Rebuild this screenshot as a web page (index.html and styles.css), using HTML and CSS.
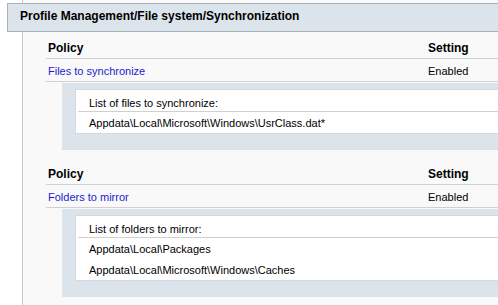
FILE: index.html
```html
<!DOCTYPE html>
<html lang="en">
<head>
    <meta charset="UTF-8">
    <title>Profile Management - Synchronization</title>
    <link rel="stylesheet" href="styles.css">
</head>
<body>
    <div class="report">
        <div class="category">Profile Management/File system/Synchronization</div>

        <div class="policy-block first">
            <div class="policy-row head">
                <span class="name">Policy</span>
                <span class="setting">Setting</span>
            </div>
            <div class="policy-row">
                <span class="name link">Files to synchronize</span>
                <span class="setting">Enabled</span>
            </div>
            <div class="details">
                <div class="list">
                    <div class="list-title">List of files to synchronize:</div>
                    <div class="list-item">Appdata\Local\Microsoft\Windows\UsrClass.dat*</div>
                </div>
            </div>
        </div>

        <div class="policy-block">
            <div class="policy-row head">
                <span class="name">Policy</span>
                <span class="setting">Setting</span>
            </div>
            <div class="policy-row">
                <span class="name link">Folders to mirror</span>
                <span class="setting">Enabled</span>
            </div>
            <div class="details">
                <div class="list">
                    <div class="list-title">List of folders to mirror:</div>
                    <div class="list-item">Appdata\Local\Packages</div>
                    <div class="list-item">Appdata\Local\Microsoft\Windows\Caches</div>
                </div>
            </div>
        </div>
    </div>
</body>
</html>
```

FILE: styles.css
```css
html, body {
    margin: 0;
    padding: 0;
    height: 100%;
    background-color: #ffffff;
    overflow: hidden;
}
body {
    font-family: 'Liberation Sans', Arial, sans-serif;
    font-size: 11px;
    color: #000000;
}
.report {
    margin-left: 22px;
    padding-top: 3px;
    min-height: 100%;
    box-sizing: border-box;
    border-left: 1px solid #c9c9c9;
    background-color: #f9f9f9;
}
.category {
    margin-left: -16px;
    height: 27px;
    line-height: 25px;
    padding-left: 12px;
    border: 1px solid #a9b2ba;
    border-right: none;
    background-color: #dbe4eb;
    font-weight: bold;
    font-size: 12px;
}
.policy-block {
    margin-left: 23px;
    margin-top: 8px;
}
.policy-block.first {
    margin-top: 0;
}
.policy-row {
    display: flex;
    height: 23px;
    line-height: 15px;
    padding-top: 5px;
    box-sizing: border-box;
    padding-left: 2px;
    border-bottom: 1px solid #d0d0d0;
}
.policy-row.head {
    height: 27px;
    padding-top: 9px;
    font-weight: bold;
    font-size: 12px;
}
.policy-row .name {
    flex: 1;
}
.policy-row .setting {
    width: 70px;
}
.link {
    color: #1c1cd0;
}
.details {
    margin: 1px 0 0 16px;
    padding: 6px 0 16px 13px;
    background-color: #dbe4eb;
}
.list {
    background-color: #ffffff;
    border: 1px solid #d3d9de;
    border-right: none;
}
.list-title {
    height: 21px;
    line-height: 26px;
    padding-left: 11px;
    margin-left: 2px;
    border-bottom: 1px solid #d0d0d0;
}
.list-item {
    height: 21px;
    line-height: 23px;
    padding-left: 13px;
}
```
